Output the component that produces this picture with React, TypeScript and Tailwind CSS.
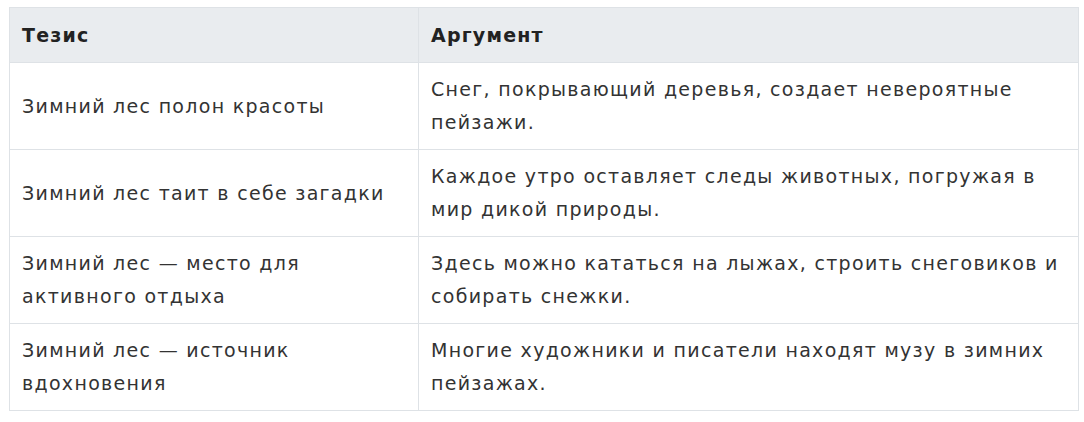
const rows = [
  ["Зимний лес полон красоты", "Снег, покрывающий деревья, создает невероятные пейзажи."],
  ["Зимний лес таит в себе загадки", "Каждое утро оставляет следы животных, погружая в мир дикой природы."],
  ["Зимний лес — место для активного отдыха", "Здесь можно кататься на лыжах, строить снеговиков и собирать снежки."],
  ["Зимний лес — источник вдохновения", "Многие художники и писатели находят музу в зимних пейзажах."],
];

export default function App() {
  return (
    <div className="pl-[9px] pt-[7px] bg-white font-['DejaVu_Sans',sans-serif]">
      <table className="w-[1070px] border-collapse table-fixed text-left">
        <colgroup>
          <col className="w-[409px]" />
          <col />
        </colgroup>
        <thead>
          <tr className="h-[55px] bg-[#e9ecef]">
            <th className="border border-[#dee2e6] px-3 text-[19px] font-bold text-[#222] tracking-[1.2px]">Тезис</th>
            <th className="border border-[#dee2e6] px-3 text-[19px] font-bold text-[#222] tracking-[1.2px]">Аргумент</th>
          </tr>
        </thead>
        <tbody>
          {rows.map(([a, b]) => (
            <tr key={a} className="h-[87px]">
              <td className="border border-[#dee2e6] px-3 align-middle text-[19px] leading-[33px] tracking-[1.3px] text-[#333]">{a}</td>
              <td className="border border-[#dee2e6] px-3 align-middle text-[19px] leading-[33px] tracking-[1.3px] text-[#333]">{b}</td>
            </tr>
          ))}
        </tbody>
      </table>
    </div>
  );
}
